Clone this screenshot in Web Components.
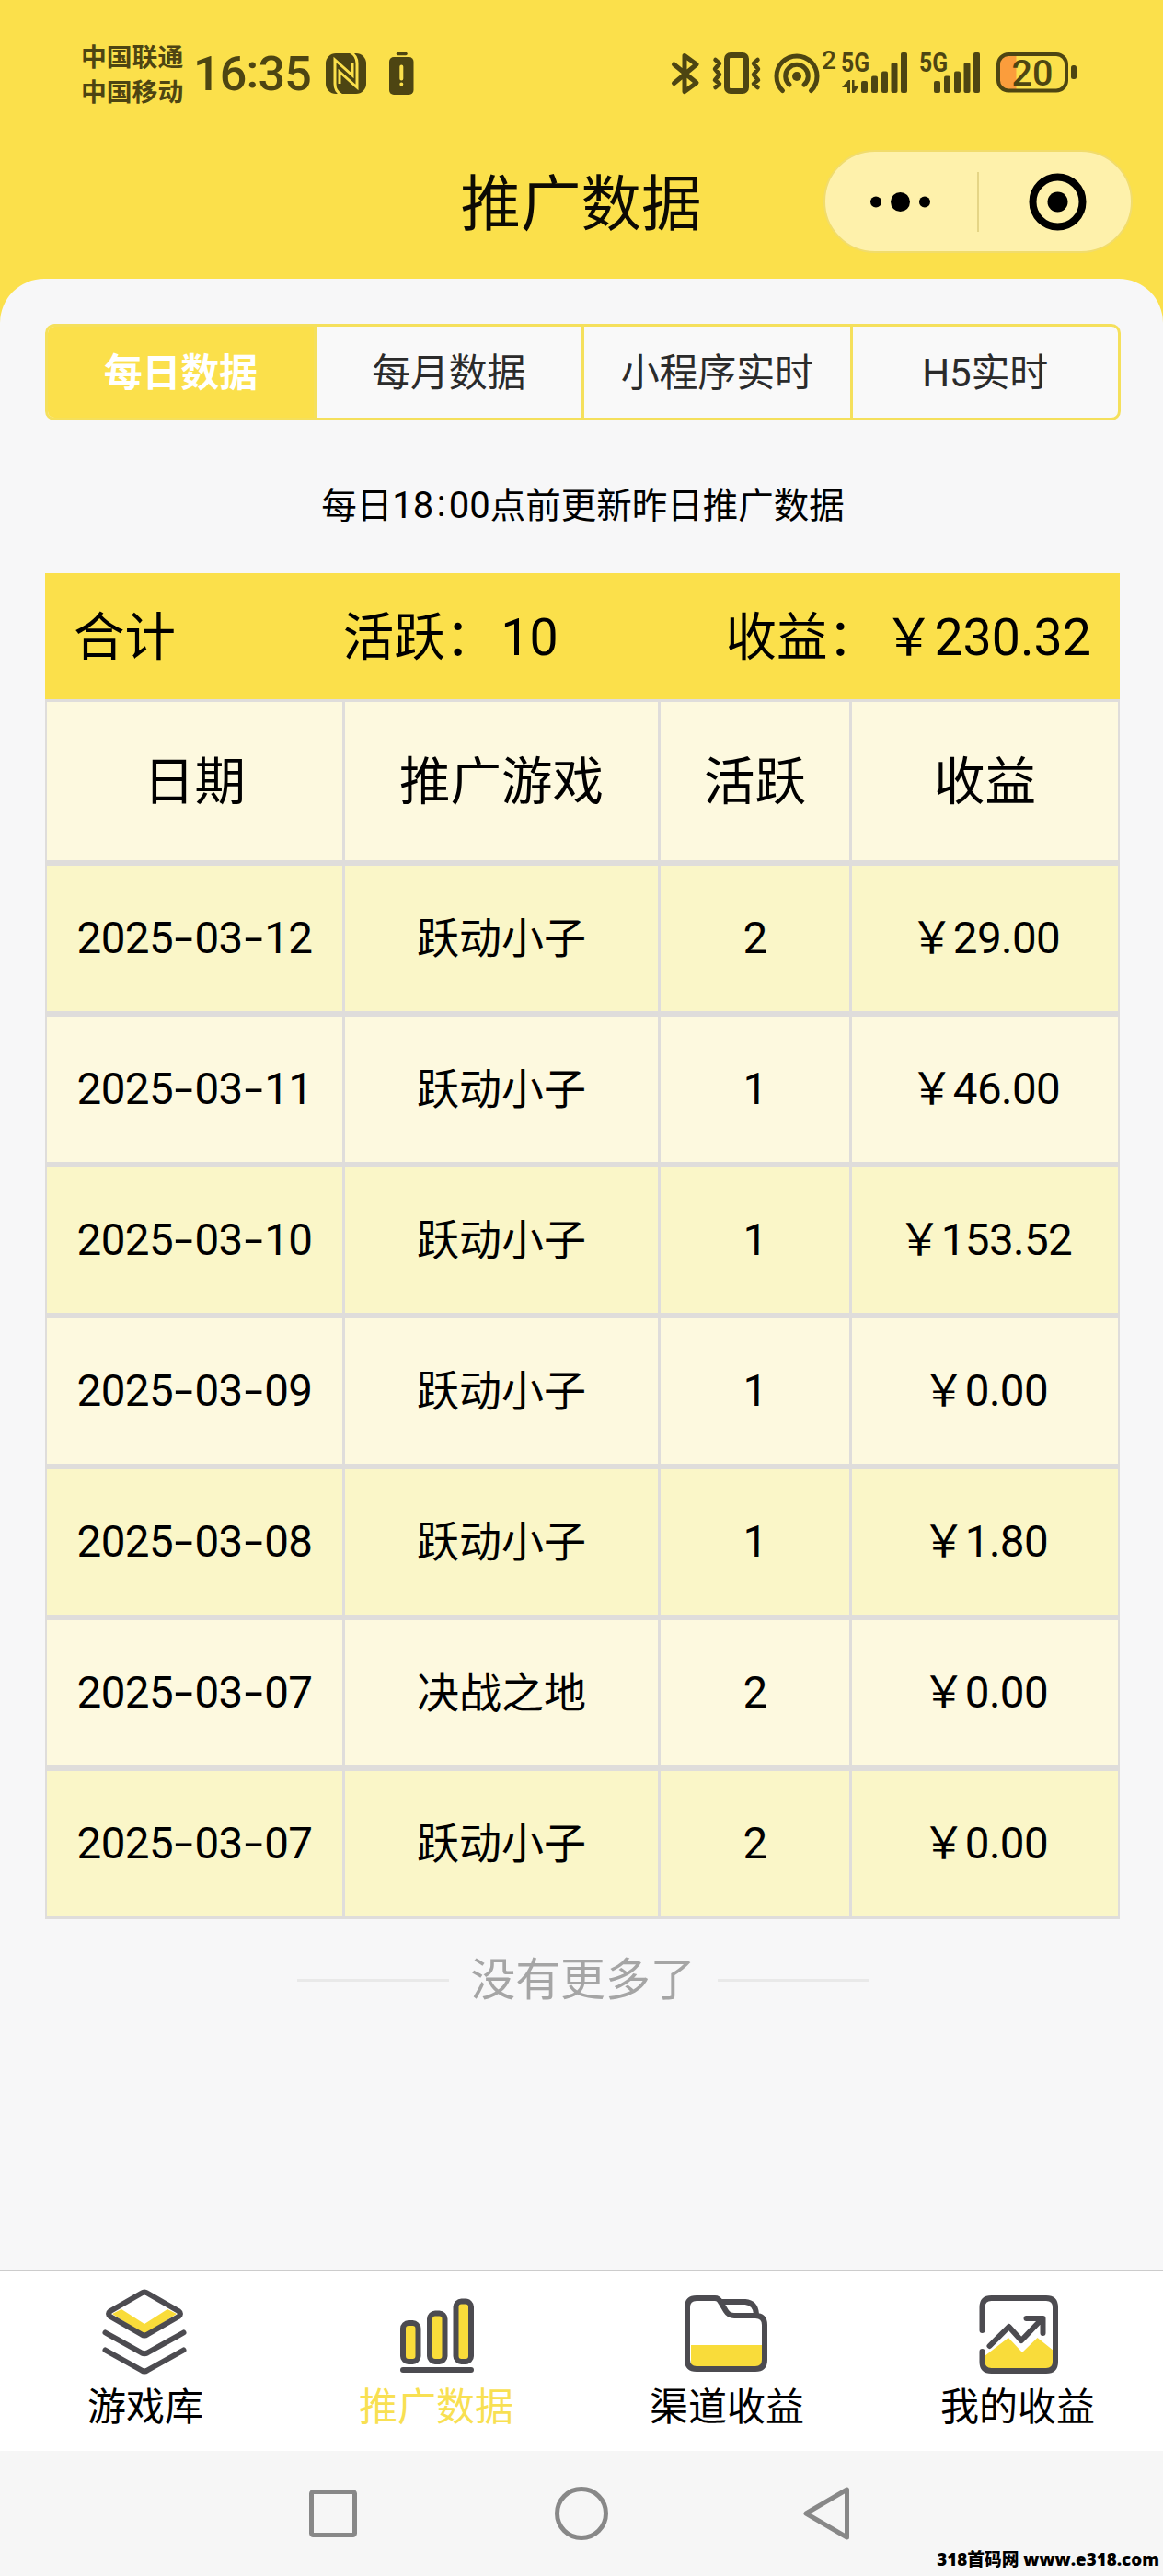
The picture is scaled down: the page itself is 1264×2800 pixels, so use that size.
<!DOCTYPE html>
<html lang="zh-CN">
<head>
<meta charset="utf-8">
<meta name="viewport" content="width=1264">
<title>推广数据</title>
<style>
  html, body { margin: 0; }
  body {
    width: 1264px; height: 2800px; overflow: hidden; background: #f7f7f7;
    --yellow: #fbe04b; --page: #f7f7f8; --line: #dfdddb; --ink: #4d4512;
    font-family: Roboto, "Noto Sans CJK SC", sans-serif; color: #000;
  }
</style>
</head>
<body>
<promo-app></promo-app>
<script>
const define = (name, html, setup) => {
  const t = document.createElement('template');
  t.innerHTML = html;
  customElements.define(name, class extends HTMLElement {
    constructor() {
      super();
      this.attachShadow({ mode: 'open' }).append(t.content.cloneNode(true));
    }
    connectedCallback() { if (setup) setup(this, this.shadowRoot); }
  });
};

define('status-bar', `
<style>
  :host { display: flex; align-items: flex-start; height: 137px; padding-left: 88px; box-sizing: border-box; color: var(--ink); }
  svg { display: block; flex: none; }
  .carriers { width: 114px; padding-top: 41px; font: 700 27.8px/38px "Noto Sans CJK SC", sans-serif; letter-spacing: 0; white-space: nowrap; }
  .time { width: 142px; margin-left: 8px; padding-top: 50px; font: 500 52px/61px Roboto, sans-serif; letter-spacing: -.8px; white-space: nowrap; }
  .time i { font-style: normal; position: relative; top: -3px; }
  text { font-family: Roboto, sans-serif; fill: #4d4512; }
</style>
<div class="carriers"><div>中国联通</div><div>中国移动</div></div>
<div class="time">16<i>:</i>35</div>
<svg width="848" height="136" viewBox="352 0 848 136" fill="none" stroke="#4d4512" stroke-linecap="round" stroke-linejoin="round">
  <rect x="354" y="58" width="44" height="44" rx="11" fill="#4d4512" stroke="none"/>
  <g stroke="#fbe04b" stroke-width="3" stroke-linecap="butt" stroke-linejoin="miter">
    <path d="M371 103C365 100 364 96 364 91V65L383 82V69"/><path d="M381 57C387 60 388 64 388 69V95L369 78V91"/>
  </g>
  <rect x="423" y="62" width="26.500" height="41" rx="5" fill="#4d4512" stroke="none"/>
  <path d="M432.500 58.500H441" stroke-width="3.500"/>
  <path d="M436.300 72.500V85.500M436.300 91.500V91.600" stroke="#fbe04b" stroke-width="4"/>
  <path d="M732.500 70L757 90L744 99.500V60.500L757 70L732.500 90.500" stroke-width="5"/>
  <rect x="790" y="60" width="21" height="39" rx="4" stroke-width="6"/>
  <path d="M777.500 65L782 69L777 75L782 81L777 87L782 91L777.500 95M823.500 65L819 69L824 75L819 81L824 87L819 91L823.500 95" stroke-width="4.500"/>
  <circle cx="866" cy="83" r="5" fill="#4d4512" stroke="none"/>
  <path d="M858 92A12.300 12.300 0 1 1 874 92M850.500 98.500A22 22 0 1 1 881.500 98.500" stroke-width="5"/>
  <text x="893" y="75" font-size="28" font-weight="500" stroke="none">2</text>
  <g stroke="none" font-size="29" font-weight="700">
    <text x="914" y="78" textLength="31" lengthAdjust="spacingAndGlyphs">5G</text>
    <text x="999" y="78" textLength="31" lengthAdjust="spacingAndGlyphs">5G</text>
  </g>
  <g fill="#4d4512" stroke="none">
    <path d="M915 95L922 87H924V101H921V95ZM926 87H928.500V93H934L928.500 101H926Z"/>
    <rect x="936" y="88" width="7" height="13" rx="2"/><rect x="947" y="82.500" width="7" height="18.500" rx="2"/>
    <rect x="958" y="77.500" width="7" height="23.500" rx="2"/><rect x="968.500" y="68" width="7" height="33" rx="2"/>
    <rect x="979" y="57" width="7" height="44" rx="2"/>
    <rect x="1015" y="88" width="7" height="13" rx="2"/><rect x="1026" y="82.500" width="7" height="18.500" rx="2"/>
    <rect x="1037" y="77.500" width="7" height="23.500" rx="2"/><rect x="1047.500" y="68" width="7" height="33" rx="2"/>
    <rect x="1058" y="57" width="7" height="44" rx="2"/>
    <rect x="1164" y="71" width="6" height="15" rx="2.500"/>
  </g>
  <path d="M1104.500 60H1096Q1086 60 1086 70V87Q1086 97 1096 97H1104.500Z" fill="#fb9d3c" stroke="none"/>
  <rect x="1085" y="59" width="74" height="39.500" rx="11" stroke-width="4"/>
  <text x="1099.500" y="93" font-size="39.500" font-weight="500" stroke="none" textLength="45">20</text>
</svg>`);

define('title-bar', `
<style>
  :host { display: grid; grid-template-columns: 368px 527px 337px; height: 166px; box-sizing: border-box; }
  h1 { grid-column: 2; margin: 0; padding-top: 31px; text-align: center; font: 400 65.500px/98px "Noto Sans CJK SC", sans-serif; color: #0c0a04; }
  .capsule { grid-column: 3; margin-top: 26px; box-sizing: border-box; width: 336px; height: 112px; border: 2px solid #f1dc6c; border-radius: 56px; background: #fef1ab; }
  svg { display: block; }
</style>
<h1><slot></slot></h1>
<div class="capsule"><svg width="331" height="108" viewBox="897 165 331 108">
  <circle cx="952" cy="219.500" r="6"/><circle cx="978.500" cy="219.500" r="10.500"/><circle cx="1005" cy="219.500" r="6"/>
  <path d="M1063 187V252" stroke="#dccb7a" stroke-width="1.500"/>
  <circle cx="1149.500" cy="219.500" r="27" fill="none" stroke="#000" stroke-width="8"/><circle cx="1149.500" cy="219.500" r="11"/>
</svg></div>`);

define('segment-tabs', `
<style>
  :host { display: flex; width: 1169px; height: 105px; box-sizing: border-box; border: 3px solid #f5e05c; border-radius: 10px; overflow: hidden; background: #f9f9f9; }
  div { flex: 1; display: flex; align-items: center; justify-content: center; box-sizing: border-box; font-size: 42px; line-height: 60px; letter-spacing: -.2px; color: #2b2b2b; padding-top: 3px; white-space: nowrap; }
  div + div { border-left: 3px solid #f5e05c; }
  .on { background: var(--yellow); color: #fff; font-weight: 700; }
</style>`, (el, root) => {
  el.getAttribute('items').split(',').forEach((label, i) => {
    const d = document.createElement('div');
    d.textContent = label;
    if (i === 0) d.className = 'on';
    root.append(d);
  });
});

define('summary-row', `
<style>
  :host { display: flex; justify-content: space-between; align-items: center; height: 137px; padding: 0 31px; box-sizing: border-box; background: var(--yellow); font-size: 55.500px; line-height: 80px; white-space: nowrap; }
  ::slotted(*) { position: relative; top: 2px; }
</style><slot></slot>`);

define('data-row', `
<style>
  :host { display: grid; grid-template-columns: 321px 340px 205px 1fr; column-gap: 3px; padding: 0 2px; height: 158px; background: var(--line); font-size: 46px; }
  :host([head]) { height: 172px; font-size: 55.500px; }
  :host([head]) div { padding: 4px 0 0; }
  div { display: flex; align-items: center; justify-content: center; background: #fdf9df; white-space: nowrap; line-height: 1.300; padding-top: 2px; }
  :host([tint]) div { background: #faf6c8; }
  .n { font-size: 47.500px; letter-spacing: -.6px; }
  .h { display: inline-block; width: 23.500px; text-align: center; transform: scaleX(1.550); letter-spacing: 0; }
</style>`, (el, root) => {
  el.getAttribute('cells').split('|').forEach(text => {
    const cell = document.createElement('div');
    const s = document.createElement('span');
    if (!el.hasAttribute('head') && /\d/.test(text)) s.className = 'n';
    // Hyphens in dates are set wider than the font's own
    text.split(/(-)/).forEach(part => {
      if (part === '-') {
        const h = document.createElement('span');
        h.className = 'h';
        h.textContent = '-';
        s.append(h);
      } else s.append(part);
    });
    cell.append(s);
    root.append(cell);
  });
});

define('data-table', `
<style>
  :host { display: flex; flex-direction: column; gap: 6px; width: 1168px; background: var(--line); border-bottom: 3px solid var(--line); }
  .top { display: flex; flex-direction: column; gap: 3px; }
</style>
<div class="top"><slot name="top"></slot></div><slot></slot>`);

define('end-note', `
<style>
  :host { display: flex; align-items: center; justify-content: center; gap: 24px; width: 622px; height: 72px; margin: 31px auto 0; color: #a5a5a5; font-size: 48.800px; line-height: 72px; white-space: nowrap; }
  i { flex: 1; height: 3px; background: #e9e9e9; margin-top: -2px; }
</style><i></i><slot></slot><i></i>`);

define('tab-item', `
<style>
  :host { flex: 1; display: flex; flex-direction: column; align-items: center; font-size: 42px; line-height: 60px; white-space: nowrap; }
  :host([active]) { color: #f8e052; }
  .icon { height: 118px; }
  ::slotted(svg) { display: block; }
</style><div class="icon"><slot name="icon"></slot></div><div><slot></slot></div>`);

define('tab-bar', `
<style>
  :host { display: flex; height: 197px; box-sizing: border-box; border-top: 2px solid #ccc; background: #fff; }
</style><slot></slot>`);

define('system-nav', `
<style>
  :host { display: block; height: 136px; background: #f6f6f6; position: relative; }
  svg { display: block; }
  .mark { position: absolute; right: 4px; bottom: 4px; font: 800 18.800px/27px "Open Sans", "Noto Sans CJK SC", sans-serif; color: #000; white-space: nowrap; text-shadow: 0 0 2px #fff, 0 0 2px #fff; letter-spacing: 0; }
</style>
<svg width="1264" height="136" viewBox="0 2664 1264 136" fill="none" stroke="#888" stroke-width="5" stroke-linejoin="round">
  <rect x="338.500" y="2708.500" width="47" height="47" rx="2"/><circle cx="632" cy="2732" r="26.500"/>
  <path d="M876 2732L920.500 2706V2758Z"/>
</svg>
<div class="mark">318首码网 www.e318.com</div>`);

const icon = (cx, body) =>
  `<svg slot="icon" width="100" height="116" viewBox="${cx - 50} 2469 100 116" fill="none" stroke="#4c4b50" stroke-width="6" stroke-linecap="round" stroke-linejoin="round">${body}</svg>`;

define('promo-app', `
<style>
  :host { display: flex; flex-direction: column; width: 1264px; height: 2800px; background: var(--yellow); }
  main { flex: 1; display: flex; flex-direction: column; box-sizing: border-box; padding: 49px 46px 0 49px; background: var(--page); border-radius: 48px 48px 0 0; }
  .tip { margin: 63px 0 43px; height: 60px; text-align: center; font-size: 38.500px; line-height: 60px; white-space: nowrap; }
  .tip span { font-size: 40px; }
  .tip i { font-style: normal; position: relative; top: -2px; padding: 0 3.500px; }
  .gap { margin-left: 5px; }
</style>
<status-bar></status-bar>
<title-bar>推广数据</title-bar>
<main>
  <segment-tabs items="每日数据,每月数据,小程序实时,H5实时"></segment-tabs>
  <div class="tip">每日<span>18<i>:</i>00</span>点前更新昨日推广数据</div>
  <data-table>
    <summary-row slot="top"><span>合计</span><span>活跃：<span class="gap">10</span></span><span>收益：<span class="gap">￥230.32</span></span></summary-row>
    <data-row slot="top" head cells="日期|推广游戏|活跃|收益"></data-row>
    <data-row tint cells="2025-03-12|跃动小子|2|￥29.00"></data-row>
    <data-row cells="2025-03-11|跃动小子|1|￥46.00"></data-row>
    <data-row tint cells="2025-03-10|跃动小子|1|￥153.52"></data-row>
    <data-row cells="2025-03-09|跃动小子|1|￥0.00"></data-row>
    <data-row tint cells="2025-03-08|跃动小子|1|￥1.80"></data-row>
    <data-row cells="2025-03-07|决战之地|2|￥0.00"></data-row>
    <data-row tint cells="2025-03-07|跃动小子|2|￥0.00"></data-row>
  </data-table>
  <end-note>没有更多了</end-note>
</main>
<tab-bar>
  <tab-item>${icon(158, `<path d="M122 2515L132 2510L157 2526L182 2510L192 2515L157 2538Z" fill="#f9dc3a" stroke="none"/><path d="M154 2492.500Q157 2490.500 160 2492.500L194 2512Q198 2515 194 2518L160 2537.500Q157 2539.500 154 2537.500L120 2518Q116 2515 120 2512Z"/><path d="M114.500 2535.500L154 2557.500Q157 2559 160 2557.500L199.500 2535.500M114.500 2554.500L154 2576.500Q157 2578.500 160 2576.500L199.500 2554.500"/>`)}游戏库</tab-item>
  <tab-item active>${icon(474, `<g fill="#f9dc3a"><rect x="438" y="2531" width="16.500" height="42" rx="6" transform="translate(0 -6)"/><rect x="467" y="2514.500" width="16.500" height="52.500" rx="6"/><rect x="495.500" y="2501.500" width="16.500" height="65.500" rx="6"/></g><path d="M438 2576H512"/>`)}推广数据</tab-item>
  <tab-item>${icon(790, `<path d="M751 2549H828V2572H751Z" fill="#f9dc3a" stroke="none"/><path d="M757 2498H777Q781 2498 783 2502L789 2512Q792 2517 798 2517H821Q831 2517 831 2527V2565Q831 2575 821 2575H757Q747 2575 747 2565V2508Q747 2498 757 2498ZM783 2502H810Q821 2503 822 2515"/>`)}渠道收益</tab-item>
  <tab-item>${icon(1106, `<path d="M1070 2561L1096 2541L1111 2557L1127.500 2541L1145 2555V2575H1075Q1070 2574 1070 2561Z" fill="#f9dc3a" stroke="none"/><path d="M1067.500 2533V2508Q1067.500 2498 1077.500 2498H1137Q1147 2498 1147 2508V2567Q1147 2577 1137 2577H1077.500Q1067.500 2577 1067.500 2567V2556M1075.500 2550L1096.500 2529L1110 2544L1132 2521M1115.500 2520H1133.500V2536"/>`)}我的收益</tab-item>
</tab-bar>
<system-nav></system-nav>`);
</script>
</body>
</html>
